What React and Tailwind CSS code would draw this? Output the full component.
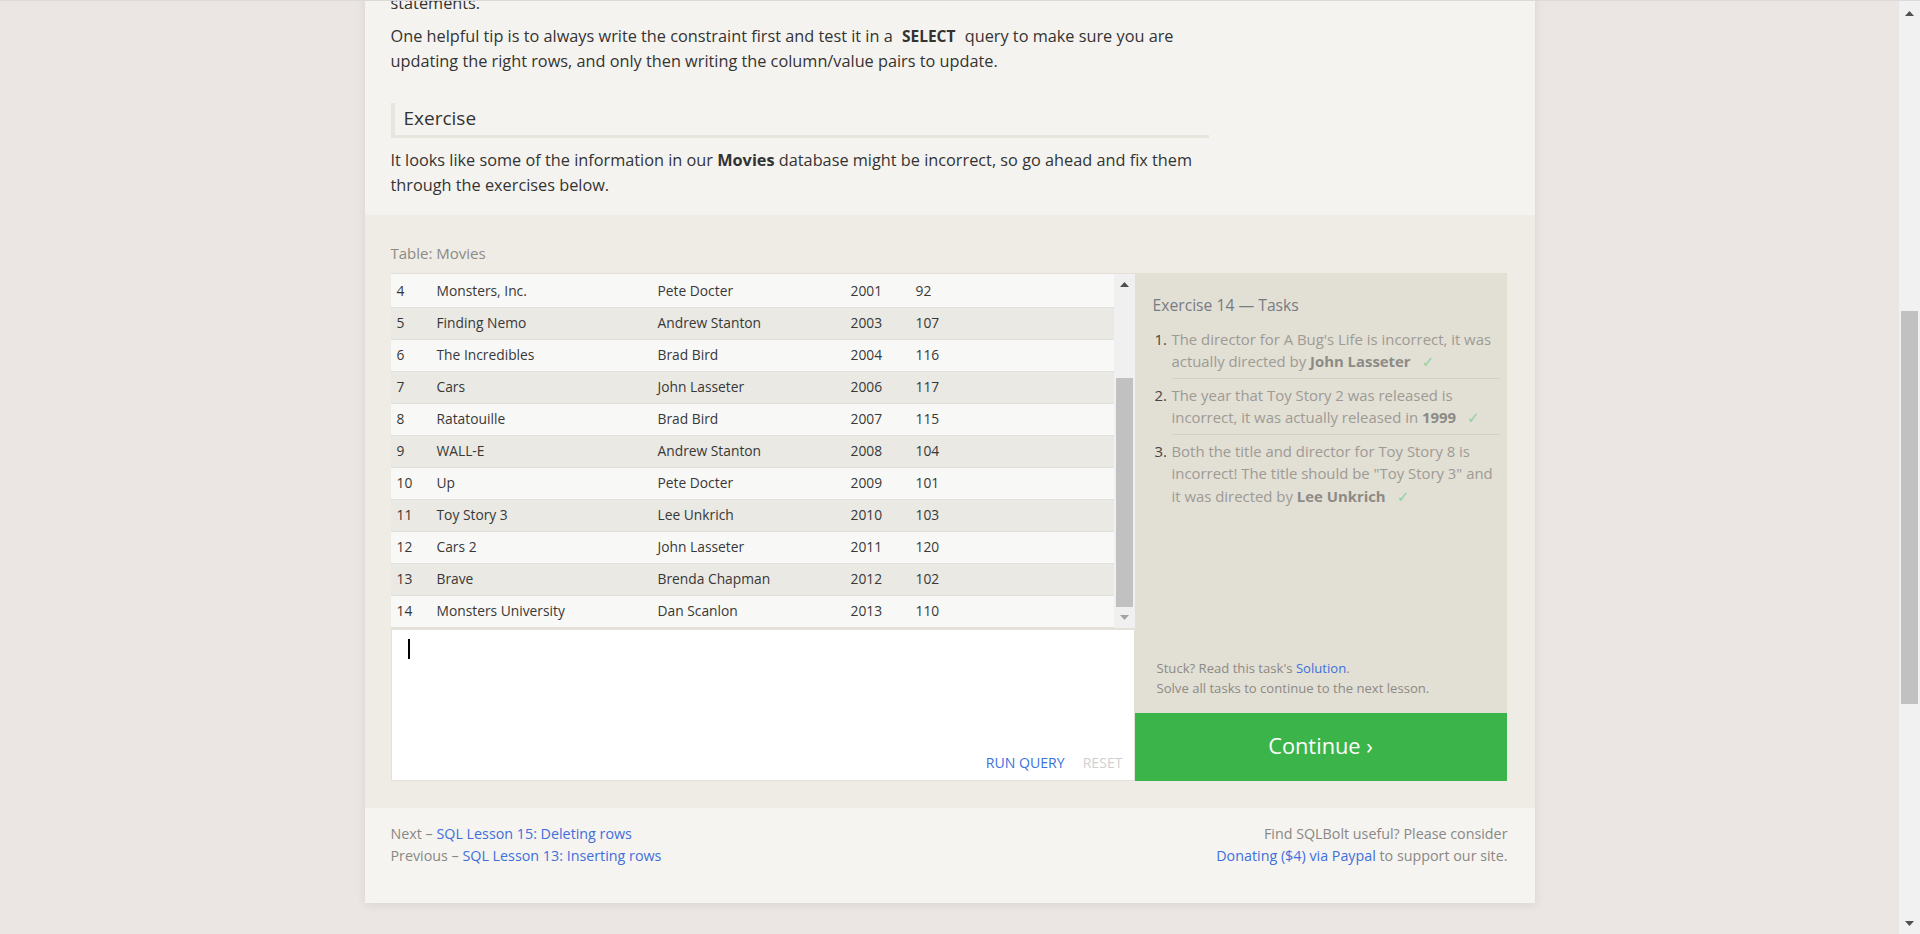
import React from 'react';

const movies = [
  [4, 'Monsters, Inc.', 'Pete Docter', 2001, 92],
  [5, 'Finding Nemo', 'Andrew Stanton', 2003, 107],
  [6, 'The Incredibles', 'Brad Bird', 2004, 116],
  [7, 'Cars', 'John Lasseter', 2006, 117],
  [8, 'Ratatouille', 'Brad Bird', 2007, 115],
  [9, 'WALL-E', 'Andrew Stanton', 2008, 104],
  [10, 'Up', 'Pete Docter', 2009, 101],
  [11, 'Toy Story 3', 'Lee Unkrich', 2010, 103],
  [12, 'Cars 2', 'John Lasseter', 2011, 120],
  [13, 'Brave', 'Brenda Chapman', 2012, 102],
  [14, 'Monsters University', 'Dan Scanlon', 2013, 110],
];

const Arrow = ({ down = false, color = '#505050' }) => (
  <svg width="9" height="5" viewBox="0 0 9 5" className={down ? 'rotate-180' : ''}>
    <path d="M0 5 L4.5 0 L9 5 Z" fill={color} />
  </svg>
);

const Check = () => (
  <span className="ml-[11px] text-[#8fd39c] font-['DejaVu_Sans',sans-serif] text-[15px]">✓</span>
);

const Lesson = () => (
  <div className="bg-[#f5f3f0] px-[26px] pb-[16px] text-[16.3px] leading-[25.5px] text-[#333]">
    <p className="mb-[7px]">statements.</p>
    <p className="whitespace-nowrap">
      One helpful tip is to always write the constraint first and test it in a{' '}
      <code className="font-['Open_Sans',sans-serif] font-bold text-[15.5px] px-[5px]">SELECT</code>{' '}
      query to make sure you are
      <br />
      updating the right rows, and only then writing the column/value pairs to update.
    </p>
    <div className="mt-[28px] w-[818px] h-[35px] border-l-4 border-b-[3px] border-[#e8e5dd] pl-[9px] flex items-center text-[19px] text-[#333]">
      Exercise
    </div>
    <p className="mt-[10px] whitespace-nowrap">
      It looks like some of the information in our <strong>Movies</strong> database might be incorrect, so go ahead and fix them
      <br />
      through the exercises below.
    </p>
  </div>
);

const TableScrollbar = () => (
  <div className="w-[21px] bg-[#f0f0f0] flex flex-col items-center">
    <div className="h-[21px] flex items-center justify-center"><Arrow /></div>
    <div className="h-[83px]" />
    <div className="w-[17px] h-[229px] bg-[#c1c1c1]" />
    <div className="flex-1 flex items-center justify-center"><Arrow down color="#a3a3a3" /></div>
  </div>
);

const ResultTable = () => (
  <div className="h-[355px] flex border-t border-[#e2dfd8] overflow-hidden">
    <div className="flex-1 pt-[2px] text-[13.8px] text-[#383838] bg-[#f8f8f7]">
      {movies.map((row, i) => (
        <div
          key={row[0]}
          className={`h-[32px] grid grid-cols-[40px_221px_193px_65px_1fr] items-center border-b border-[#e2e0d9] ${i % 2 === 0 ? 'bg-[#f8f8f7]' : 'bg-[#eae9e3]'}`}
        >
          {row.map((cell, j) => (
            <div key={j} className="pl-[6px] pt-[1px] whitespace-nowrap">{cell}</div>
          ))}
        </div>
      ))}
    </div>
    <TableScrollbar />
  </div>
);

const Editor = () => (
  <div className="h-[153px] bg-white border border-t-2 border-[#e4e1d9] flex flex-col">
    <div className="ml-[16px] mt-[9px] w-[2px] h-[20px] bg-black" />
    <div className="mt-auto pb-[7px] pr-[11px] flex justify-end items-center gap-[18px] text-[14.1px] leading-[20px]">
      <span className="text-[#3b73dc]">RUN QUERY</span>
      <span className="text-[#cfcfcf]">RESET</span>
    </div>
  </div>
);

const TaskPanel = () => (
  <div className="flex-1 bg-[#e2dfd5] pl-[18px] pr-[7px] pt-[21px] pb-[15px] flex flex-col">
    <div className="text-[15.7px] leading-[22px] text-[#777c84]">Exercise 14 — Tasks</div>
    <ol className="mt-[12px] text-[14.9px] leading-[22.5px] text-[#9d9b94]">
      <li className="flex">
        <span className="w-[19px] pl-[2px] text-[#444]">1.</span>
        <div className="flex-1 border-b border-[#d3d0c6] pb-[4px] whitespace-nowrap">
          The director for A Bug's Life is incorrect, it was
          <br />
          actually directed by <b className="text-[#8c8b85]">John Lasseter</b>
          <Check />
        </div>
      </li>
      <li className="flex">
        <span className="w-[19px] pl-[2px] pt-[5px] text-[#444]">2.</span>
        <div className="flex-1 border-b border-[#d3d0c6] pt-[5px] pb-[4px] whitespace-nowrap">
          The year that Toy Story 2 was released is
          <br />
          incorrect, it was actually released in <b className="text-[#8c8b85]">1999</b>
          <Check />
        </div>
      </li>
      <li className="flex">
        <span className="w-[19px] pl-[2px] pt-[5px] text-[#444]">3.</span>
        <div className="flex-1 pt-[5px] whitespace-nowrap">
          Both the title and director for Toy Story 8 is
          <br />
          incorrect! The title should be "Toy Story 3" and
          <br />
          it was directed by <b className="text-[#8c8b85]">Lee Unkrich</b>
          <Check />
        </div>
      </li>
    </ol>
    <div className="mt-auto pl-[4px] text-[13.1px] leading-[20px] text-[#8c8a84]">
      <p>Stuck? Read this task's <span className="text-[#3f6fdb]">Solution</span>.</p>
      <p>Solve all tasks to continue to the next lesson.</p>
    </div>
  </div>
);

const ExerciseArea = () => (
  <div className="bg-[#efece5] pl-[26px] pr-[28px] pt-[28px] pb-[27px]">
    <div className="h-[20px] leading-[20px] text-[15px] text-[#8b8a86] mb-[10px]">Table: Movies</div>
    <div className="flex">
      <div className="w-[744px]">
        <ResultTable />
        <Editor />
      </div>
      <div className="w-[372px] flex flex-col">
        <TaskPanel />
        <div className="h-[68px] bg-[#3bb54a] text-white text-[21.8px] flex items-center justify-center">
          Continue ›
        </div>
      </div>
    </div>
  </div>
);

const Footer = () => (
  <div className="bg-[#f5f4f1] pl-[26px] pr-[27px] pt-[15px] pb-[35px] flex justify-between text-[14.3px] leading-[22.5px] text-[#8a8884]">
    <div>
      <p>Next – <span className="text-[#3f6fdb]">SQL Lesson 15: Deleting rows</span></p>
      <p>Previous – <span className="text-[#3f6fdb]">SQL Lesson 13: Inserting rows</span></p>
    </div>
    <div className="text-right">
      <p>Find SQLBolt useful? Please consider</p>
      <p><span className="text-[#3f6fdb]">Donating ($4) via Paypal</span> to support our site.</p>
    </div>
  </div>
);

const PageScrollbar = () => (
  <div className="w-[21px] bg-[#f1f1f1] flex flex-col items-center">
    <div className="h-[24px] flex items-center justify-center"><Arrow /></div>
    <div className="h-[286px]" />
    <div className="w-[17px] h-[393px] bg-[#c1c1c1]" />
    <div className="flex-1" />
    <div className="h-[22px] flex items-center justify-center"><Arrow down /></div>
  </div>
);

const App = () => (
  <div className="h-[934px] overflow-hidden flex bg-[#ebe6e3] border-t border-[#dadada] font-['Open_Sans',sans-serif]">
    <div className="flex-1 min-w-0">
      <div className="w-[1170px] mx-auto mt-[-10px] shadow-[0_2px_10px_rgba(0,0,0,0.08)]">
        <Lesson />
        <ExerciseArea />
        <Footer />
      </div>
    </div>
    <PageScrollbar />
  </div>
);

export default App;
